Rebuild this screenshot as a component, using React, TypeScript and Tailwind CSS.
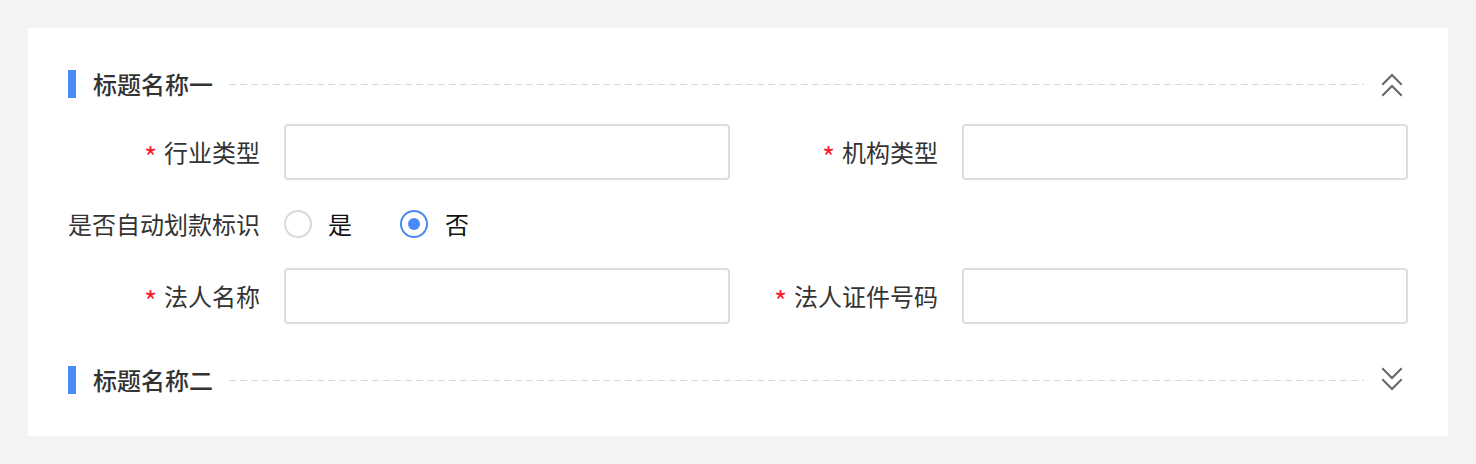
import React from "react";

const font = { fontFamily: '"Noto Sans CJK SC", "Noto Sans", sans-serif' };

function DoubleChevron({ up }: { up: boolean }) {
  return (
    <svg width="24" height="26" viewBox="0 0 24 26" fill="none" stroke="#666" strokeWidth="2" strokeLinecap="square">
      {up ? (
        <>
          <path d="M3 13 L12 4 L21 13" />
          <path d="M3 24 L12 15 L21 24" />
        </>
      ) : (
        <>
          <path d="M3 2 L12 11 L21 2" />
          <path d="M3 13 L12 22 L21 13" />
        </>
      )}
    </svg>
  );
}

function SectionHeader({ title, up }: { title: string; up: boolean }) {
  return (
    <div className="flex h-[40px] items-center">
      <div className="h-[28px] w-[8px] bg-[#4a8af4]" />
      <div className="ml-[17px] text-[24px] font-medium leading-none text-[#333]">{title}</div>
      <div className="mx-[16px] h-[1px] flex-1 bg-[linear-gradient(to_right,#dadada_60%,transparent_0)] bg-[length:11px_1px] bg-repeat-x" />
      <div className="mr-[4px] flex items-center">
        <DoubleChevron up={up} />
      </div>
    </div>
  );
}

function Field({ label, required }: { label: string; required?: boolean }) {
  return (
    <div className="flex items-center">
      <div className="flex w-[192px] items-center justify-end text-[24px] leading-none text-[#333]">
        {required && (
          <span className="mr-[7px] translate-y-[4px] text-[28px] leading-none text-[#f5222d]">*</span>
        )}
        <span>{label}</span>
      </div>
      <div className="ml-[24px] h-[56px] w-[446px] rounded-[4px] border-2 border-[#dcdcdc] bg-white" />
    </div>
  );
}

export default function App() {
  return (
    <div className="min-h-[464px] w-full bg-[#f3f3f3] p-[28px]" style={font}>
      <div className="bg-white px-[40px] py-[36px]">
        <SectionHeader title="标题名称一" up />
        <div className="mt-[20px] grid grid-cols-2 gap-x-[16px] gap-y-[20px]">
          <Field label="行业类型" required />
          <Field label="机构类型" required />
          <div className="col-span-2 flex h-[48px] items-center">
            <div className="w-[192px] text-right text-[24px] leading-none text-[#333]">是否自动划款标识</div>
            <div className="ml-[24px] flex items-center">
              <div className="h-[28px] w-[28px] rounded-full border-2 border-[#d9d9d9] bg-white" />
              <span className="ml-[16px] text-[24px] leading-none text-[#111]">是</span>
              <div className="ml-[48px] flex h-[28px] w-[28px] items-center justify-center rounded-full border-2 border-[#4a8af4] bg-white">
                <div className="h-[12px] w-[12px] rounded-full bg-[#4a8af4]" />
              </div>
              <span className="ml-[17px] text-[24px] leading-none text-[#111]">否</span>
            </div>
          </div>
          <Field label="法人名称" required />
          <Field label="法人证件号码" required />
        </div>
        <div className="mt-[36px]">
          <SectionHeader title="标题名称二" up={false} />
        </div>
      </div>
    </div>
  );
}
